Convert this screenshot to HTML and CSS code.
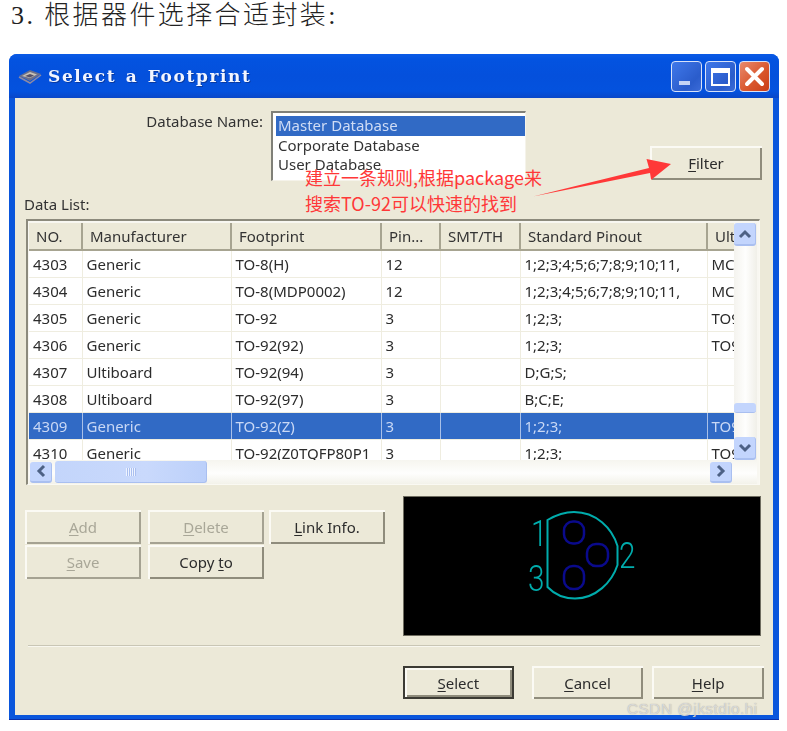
FILE: index.html
```html
<!DOCTYPE html>
<html lang="zh-CN">
<head>
    <meta charset="UTF-8">
    <meta name="viewport" content="width=device-width, initial-scale=1.0">
    <title>Select a Footprint</title>
    <link rel="stylesheet" href="styles.css">
</head>
<body>
    <div class="page">
        <h1 class="step">3. 根据器件选择合适封装:</h1>

        <div class="window">
            <div class="titlebar">
                <svg class="app-icon" width="24" height="16" viewBox="0 0 24 16">
                    <path d="M1 8 L12 2 L23 6 L12 13 Z" fill="#6a6f8c"/>
                    <path d="M4 8 L12 4 L19 6.500 L12 10 Z" fill="#c9c2b4"/>
                    <path d="M7 8 L12 6 L16 7.500 L12 9.500 Z" fill="#54506a"/>
                    <path d="M1 9 L12 15 L23 7" fill="none" stroke="#8d8aa4" stroke-width="1.500"/>
                </svg>
                <span class="title-text">Select a Footprint</span>
                <div class="caption-btns">
                    <div class="caption-btn">
                        <svg width="31" height="31" viewBox="0 0 31 31"><rect x="8" y="20" width="11" height="4" fill="#c5d4f5"/></svg>
                    </div>
                    <div class="caption-btn">
                        <svg width="31" height="31" viewBox="0 0 31 31"><rect x="7" y="8" width="17" height="16" fill="none" stroke="#fff" stroke-width="2"/><rect x="7" y="8" width="17" height="4" fill="#fff"/></svg>
                    </div>
                    <div class="caption-btn close">
                        <svg width="31" height="31" viewBox="0 0 31 31"><path d="M8 8 L23 23 M23 8 L8 23" stroke="#fff" stroke-width="4" stroke-linecap="round"/></svg>
                    </div>
                </div>
            </div>

            <div class="client">
                <div class="db-row">
                    <label class="db-label">Database Name:</label>
                    <ul class="db-list">
                        <li class="selected">Master Database</li>
                        <li>Corporate Database</li>
                        <li>User Database</li>
                    </ul>
                    <button class="btn filter-btn"><u>F</u>ilter</button>
                </div>

                <div class="list-label">Data List:</div>

                <div class="data-grid">
                    <div class="grid-top">
                        <div class="grid-view">
                            <table>
                                <colgroup>
                                    <col class="c-no"><col class="c-man"><col class="c-foot"><col class="c-pin"><col class="c-smt"><col class="c-std"><col class="c-ult">
                                </colgroup>
                                <thead>
                                    <tr><th>NO.</th><th>Manufacturer</th><th>Footprint</th><th>Pin...</th><th>SMT/TH</th><th>Standard Pinout</th><th>Ult</th></tr>
                                </thead>
                                <tbody>
                                    <tr><td>4303</td><td>Generic</td><td>TO-8(H)</td><td>12</td><td></td><td>1;2;3;4;5;6;7;8;9;10;11,</td><td>MCI</td></tr>
                                    <tr><td>4304</td><td>Generic</td><td>TO-8(MDP0002)</td><td>12</td><td></td><td>1;2;3;4;5;6;7;8;9;10;11,</td><td>MCI</td></tr>
                                    <tr><td>4305</td><td>Generic</td><td>TO-92</td><td>3</td><td></td><td>1;2;3;</td><td>TO92</td></tr>
                                    <tr><td>4306</td><td>Generic</td><td>TO-92(92)</td><td>3</td><td></td><td>1;2;3;</td><td>TO92</td></tr>
                                    <tr><td>4307</td><td>Ultiboard</td><td>TO-92(94)</td><td>3</td><td></td><td>D;G;S;</td><td></td></tr>
                                    <tr><td>4308</td><td>Ultiboard</td><td>TO-92(97)</td><td>3</td><td></td><td>B;C;E;</td><td></td></tr>
                                    <tr class="selected"><td>4309</td><td>Generic</td><td>TO-92(Z)</td><td>3</td><td></td><td>1;2;3;</td><td>TO92</td></tr>
                                    <tr><td>4310</td><td>Generic</td><td>TO-92(Z0TQFP80P1</td><td>3</td><td></td><td>1;2;3;</td><td>TO92</td></tr>
                                </tbody>
                            </table>
                        </div>
                        <div class="vscroll">
                            <div class="sb-btn">
                                <svg width="14" height="10" viewBox="0 0 14 10"><path d="M2 8 L7 3 L12 8" fill="none" stroke="#4d6185" stroke-width="3"/></svg>
                            </div>
                            <div class="v-track"><div class="v-thumb"></div></div>
                            <div class="sb-btn">
                                <svg width="14" height="10" viewBox="0 0 14 10"><path d="M2 2 L7 7 L12 2" fill="none" stroke="#4d6185" stroke-width="3"/></svg>
                            </div>
                        </div>
                    </div>
                    <div class="hscroll">
                        <div class="sb-btn small">
                            <svg width="10" height="14" viewBox="0 0 10 14"><path d="M8 2 L3 7 L8 12" fill="none" stroke="#4d6185" stroke-width="3"/></svg>
                        </div>
                        <div class="h-thumb"><span class="grip"></span></div>
                        <div class="sb-btn small end">
                            <svg width="10" height="14" viewBox="0 0 10 14"><path d="M2 2 L7 7 L2 12" fill="none" stroke="#4d6185" stroke-width="3"/></svg>
                        </div>
                    </div>
                </div>

                <div class="lower">
                    <div class="tools">
                        <button class="btn" disabled><u>A</u>dd</button>
                        <button class="btn" disabled><u>D</u>elete</button>
                        <button class="btn"><u>L</u>ink Info.</button>
                        <button class="btn" disabled><u>S</u>ave</button>
                        <button class="btn">Copy <u>t</u>o</button>
                    </div>
                    <div class="preview">
                        <svg width="356" height="138" viewBox="404 497 356 138">
                            <path class="outline" d="M547.500 520 L547.500 587 C556 596 566 598.500 575 598.500 C596 598.500 612 582 617.500 565 L617.500 546 C612 528 596 512 574 512 C564 512 556 515 547.500 520 Z"/>
                            <rect class="pad" x="564" y="521.500" width="20" height="22" rx="9"/>
                            <rect class="pad" x="587" y="544" width="21" height="22" rx="9"/>
                            <rect class="pad" x="564" y="566" width="20" height="23" rx="9"/>
                            <text class="pin-num" transform="translate(531 546) scale(0.8 1)">1</text>
                            <text class="pin-num" transform="translate(619 568) scale(0.8 1)">2</text>
                            <text class="pin-num" transform="translate(528 591) scale(0.8 1)">3</text>
                        </svg>
                    </div>
                </div>

                <div class="separator"></div>

                <div class="actions">
                    <button class="btn default"><u>S</u>elect</button>
                    <button class="btn"><u>C</u>ancel</button>
                    <button class="btn"><u>H</u>elp</button>
                </div>
            </div>
        </div>

        <!-- red note pasted over the screenshot -->
        <div class="note">建立一条规则,根据package来<br>搜索TO-92可以快速的找到</div>
        <svg class="note-arrow" width="787" height="731" viewBox="0 0 787 731">
            <path d="M533 196.500 L649 168 L646.500 159 L671 164 L651 180 L650 173 Z" fill="#ff3838"/>
        </svg>
        <div class="watermark">CSDN @jkstdio.hi</div>
    </div>
</body>
</html>
```

FILE: styles.css
```css
body {
    margin: 0;
    background: #fff;
    font-family: "Noto Sans", "Noto Sans CJK SC", sans-serif;
}
.page {
    position: relative;
    width: 787px;
    height: 731px;
    overflow: hidden;
}
.step {
    margin: 0;
    height: 54px;
    padding-left: 11px;
    box-sizing: border-box;
    font-family: "Liberation Serif", "Noto Sans CJK SC", serif;
    font-size: 26px;
    font-weight: 300;
    line-height: 32px;
    letter-spacing: 2.4px;
    color: #222;
}

/* window frame */
.window {
    margin-left: 9px;
    width: 770px;
    height: 666px;
    box-sizing: border-box;
    border-radius: 8px 8px 0 0;
    background: #0a56dc;
    padding: 0 6px 5px;
    border-bottom: 1px solid #0a2fa8;
    filter: blur(0.45px);
}
.titlebar {
    display: flex;
    align-items: center;
    height: 44px;
    margin: 0 -6px;
    padding: 0 9px;
    border-radius: 8px 8px 0 0;
    background: linear-gradient(#0a5ae6 0, #0353e0 12%, #0450dc 50%, #0452de 85%, #0a47c8 100%);
}
.app-icon {
    margin-right: 6px;
}
.title-text {
    font-family: "DejaVu Serif", serif;
    font-weight: bold;
    font-size: 17px;
    letter-spacing: 1.6px;
    color: #f2f5ff;
    text-shadow: 1px 1px 0 #0a3aa0;
    white-space: pre;
    word-spacing: 2px;
}
.caption-btns {
    display: flex;
    gap: 3px;
    margin-left: auto;
}
.caption-btn {
    width: 31px;
    height: 31px;
    box-sizing: border-box;
    border: 1px solid #d8e2f8;
    border-radius: 4px;
    background: linear-gradient(135deg, #3f78ea, #2a5ccb 70%, #3b6bd8);
    overflow: hidden;
}
.caption-btn svg {
    display: block;
    margin: -1px;
}
.caption-btn.close {
    background: linear-gradient(135deg, #e98a6d, #d8542a 60%, #c93f1a);
}

.client {
    height: 617px;
    background: #ece9d8;
    color: #333;
    font-size: 15px;
}

/* database picker */
.db-row {
    display: flex;
    align-items: flex-start;
    padding-top: 13px;
}
.db-label {
    width: 248px;
    margin-right: 8px;
    text-align: right;
    line-height: 20px;
}
.db-list {
    width: 255px;
    height: 70px;
    margin: 0;
    padding: 3px 0 0 3px;
    box-sizing: border-box;
    list-style: none;
    background: #fff;
    border-top: 2px solid #808078;
    border-left: 2px solid #808078;
    border-right: 1px solid #f5f3ea;
    border-bottom: 1px solid #f5f3ea;
    line-height: 19.5px;
}
.db-list li {
    padding-left: 2px;
    white-space: nowrap;
}
.db-list li.selected {
    background: #316ac5;
    color: #cfdcf5;
}
.filter-btn {
    width: 112px;
    height: 34px;
    margin-left: 124px;
    margin-top: 35px;
}

.list-label {
    height: 20px;
    margin: 13px 0 5px 9px;
    line-height: 20px;
}

/* data list */
.data-grid {
    width: 734px;
    height: 266px;
    margin-left: 11px;
    box-sizing: border-box;
    padding: 2px 2px 1px 1px;
    background: #f8f7f1;
    border-top: 2px solid #8c8a7c;
    border-left: 2px solid #8c8a7c;
    border-right: 1px solid #faf9f3;
    border-bottom: 1px solid #faf9f3;
}
.grid-top {
    display: flex;
    height: 237px;
}
.grid-view {
    width: 707px;
    height: 237px;
    overflow: hidden;
}
table {
    width: 707px;
    table-layout: fixed;
    border-collapse: collapse;
    font-size: 15px;
}
.c-no { width: 53px; }
.c-man { width: 149px; }
.c-foot { width: 150px; }
.c-pin { width: 59px; }
.c-smt { width: 80px; }
.c-std { width: 187px; }
.c-ult { width: 29px; }
th {
    height: 27px;
    padding: 0 0 0 7px;
    box-sizing: border-box;
    background: #ece9d8;
    border-right: 2px solid #a7a491;
    border-bottom: 2px solid #a7a491;
    font-weight: normal;
    text-align: left;
    white-space: nowrap;
    overflow: hidden;
}
td {
    height: 27px;
    padding: 0 0 0 4px;
    box-sizing: border-box;
    background: #fff;
    border-right: 1px solid #efede0;
    border-bottom: 1px solid #efede0;
    white-space: nowrap;
    overflow: hidden;
    color: #2c2c2c;
}
tr.selected td {
    background: #316ac5;
    color: #c9d8f5;
    border-right-color: #a9c0e8;
    border-bottom-color: #efede0;
}

/* scrollbars */
.vscroll {
    width: 23px;
    display: flex;
    flex-direction: column;
    background: linear-gradient(90deg, #f4f3ee, #fefefd 50%, #f0efe8);
}
.sb-btn {
    display: flex;
    align-items: center;
    justify-content: center;
    flex: none;
    width: 22px;
    height: 23px;
    box-sizing: border-box;
    border-radius: 3px;
    background: #c3d5fd;
    border-right: 1px solid #a9bff0;
    border-bottom: 2px solid #a9bff0;
}
.v-track {
    flex: 1;
    display: flex;
    flex-direction: column;
    justify-content: flex-end;
    padding-bottom: 24px;
}
.v-thumb {
    width: 22px;
    height: 10px;
    border-radius: 3px;
    background: #c3d5fd;
    border-bottom: 1px solid #a9bff0;
    box-sizing: border-box;
}
.hscroll {
    display: flex;
    align-items: center;
    height: 24px;
    padding-left: 1px;
    background: linear-gradient(#f6f5ef, #fefefd 55%, #f3f2ea);
}
.sb-btn.small {
    height: 21px;
}
.sb-btn.end {
    margin-left: 503px;
}
.h-thumb {
    display: flex;
    align-items: center;
    justify-content: center;
    width: 152px;
    height: 22px;
    margin-left: 3px;
    box-sizing: border-box;
    border-radius: 3px;
    background: linear-gradient(90deg, #c3d5fb, #c9d9fc 60%, #bcd0fa);
    border-right: 1px solid #a9bff0;
    border-bottom: 1px solid #a9bff0;
}
.grip {
    width: 10px;
    height: 8px;
    background: repeating-linear-gradient(90deg, #eef3ff 0 1px, #a9bff0 1px 2px);
}

/* buttons */
.btn {
    display: block;
    box-sizing: border-box;
    padding: 0;
    background: #ece9d8;
    border: none;
    font-family: inherit;
    font-size: 15px;
    color: #2c2c2c;
    box-shadow: inset 2px 2px 0 #fbfaf4, inset -2px -2px 0 #8f8c7c;
    cursor: pointer;
}
.btn:disabled {
    color: #a9a798;
    box-shadow: inset 2px 2px 0 #fbfaf4, inset -2px -2px 0 #a5a292;
}
.btn u {
    text-underline-offset: 2px;
}

.lower {
    display: flex;
    height: 138px;
    margin: 12px 0 0 10px;
}
.tools {
    display: grid;
    grid-template-columns: 123px 121px 135px;
    grid-auto-rows: 35px;
    justify-items: start;
    align-content: start;
    padding-top: 13px;
}
.tools .btn {
    width: 116px;
    height: 34px;
}
.preview {
    width: 356px;
    height: 138px;
    background: #000;
    box-shadow: 0 0 0 1px #6f6d60;
}
.preview svg {
    display: block;
}
.outline {
    fill: none;
    stroke: #00acac;
    stroke-width: 2;
}
.pad {
    fill: none;
    stroke: #0a0a8c;
    stroke-width: 2.500;
}
.pin-num {
    fill: #00acac;
    font-family: "Roboto", sans-serif;
    font-weight: 300;
    font-size: 37px;
}

.separator {
    width: 732px;
    height: 2px;
    margin: 10px 0 0 13px;
    background: #c9c6b5;
    border-bottom: 1px solid #f8f7ef;
    box-sizing: border-box;
}
.actions {
    display: flex;
    margin: 19px 0 0 388px;
}
.actions .btn {
    width: 112px;
    height: 33px;
    margin-right: 9px;
}
.actions .default {
    width: 111px;
    margin-right: 18px;
    border: 2px solid #3c3b34;
}

/* overlays on top of the screenshot */
.note {
    position: absolute;
    left: 305px;
    top: 164px;
    font-family: "Noto Sans CJK SC", "Noto Sans", sans-serif;
    font-size: 18px;
    line-height: 26px;
    color: #ff3838;
    white-space: nowrap;
}
.note-arrow {
    position: absolute;
    left: 0;
    top: 0;
}
.watermark {
    position: absolute;
    left: 627px;
    top: 700px;
    font-family: "Liberation Sans", sans-serif;
    font-size: 15.500px;
    letter-spacing: 0.4px;
    color: rgba(225, 225, 225, 0.85);
    text-shadow: 0 0 1px rgba(90, 90, 90, 0.5);
    white-space: nowrap;
}
```
